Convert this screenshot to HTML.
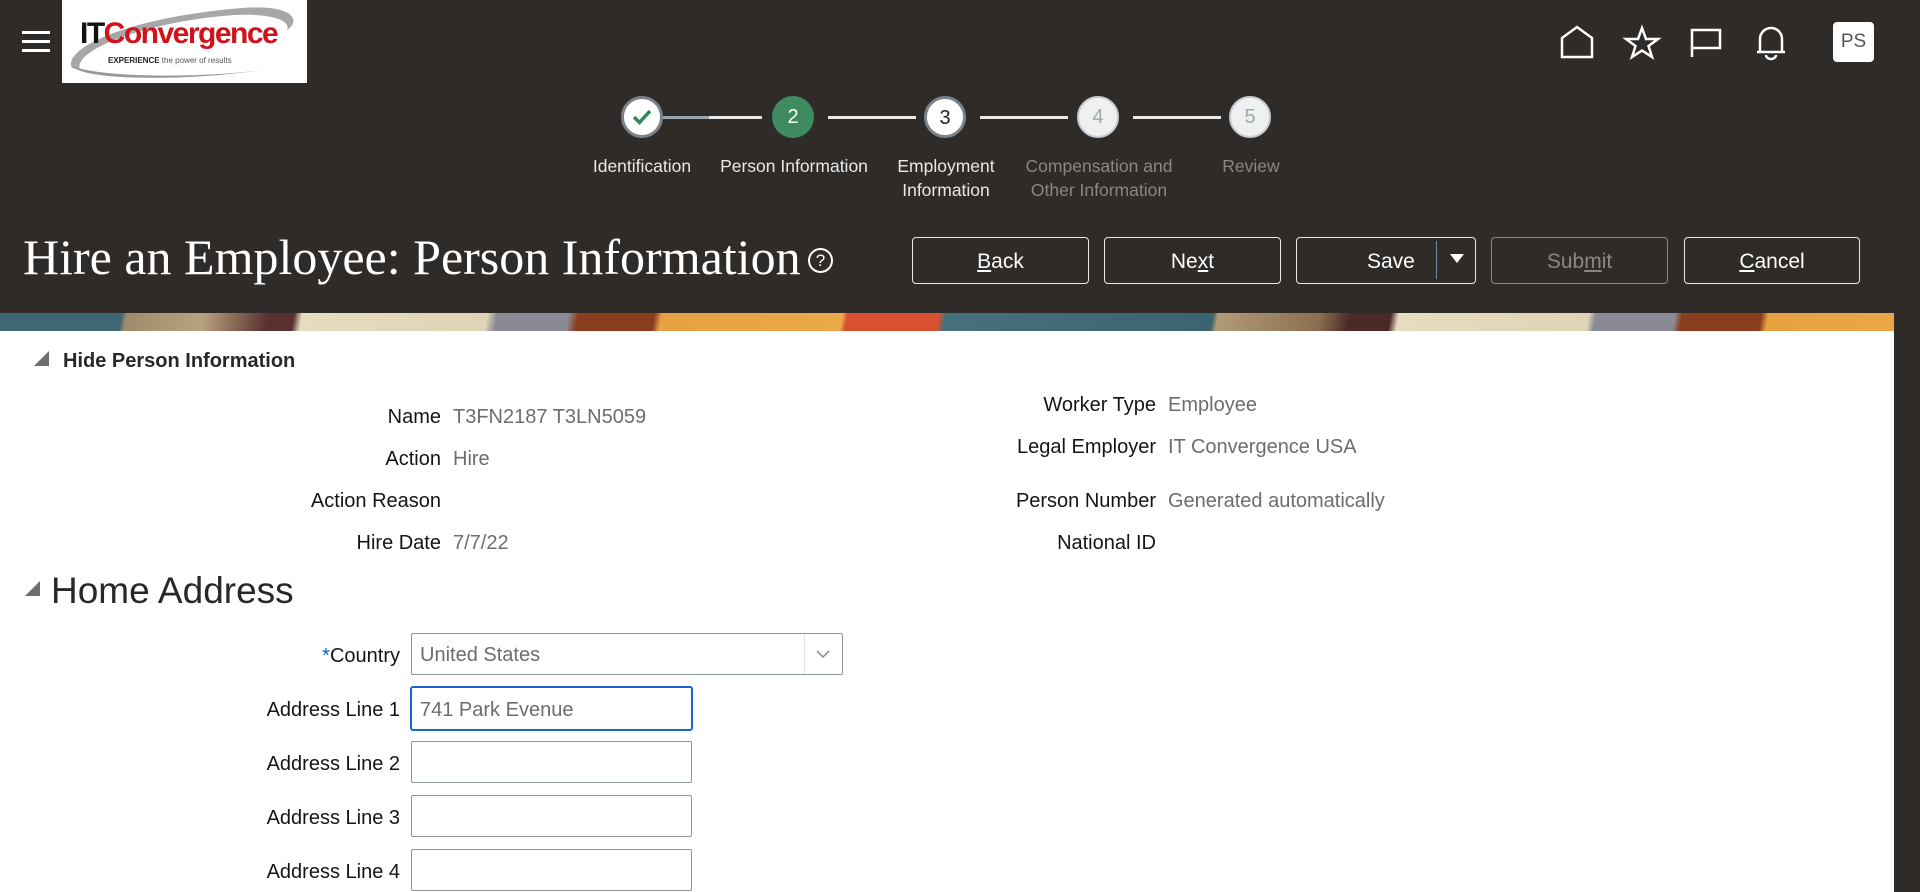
<!DOCTYPE html>
<html><head><meta charset="utf-8">
<style>
*{margin:0;padding:0;box-sizing:border-box}
body{width:1920px;height:892px;overflow:hidden;background:#2f2b28;font-family:"Liberation Sans",sans-serif;position:relative}
.abs{position:absolute}
#content{position:absolute;left:0;top:331px;width:1894px;height:561px;background:#fff}
#banner{position:absolute;left:0;top:313px;width:1894px;height:19px;
background:linear-gradient(100deg,#3f6673 0,#3f6673 120px,#a08a6a 125px,#b8a27e 200px,#5a3030 265px,#5a3030 290px,#e6dcc0 298px,#e0d4b6 480px,#8a8a94 490px,#8a8a94 560px,#8a3d1e 570px,#8a3d1e 645px,#e8a040 652px,#eba848 830px,#d95030 835px,#d95030 925px,#45707e 932px,#3c6470 1195px,#b09a78 1200px,#8a7050 1300px,#4a2a28 1330px,#4a2a28 1370px,#e6dcc0 1378px,#e0d4b6 1565px,#8a8a94 1572px,#8a8a94 1650px,#8a3d1e 1657px,#8a3d1e 1735px,#e8a040 1742px,#eba848 1894px)}
.btn{position:absolute;top:237px;height:47px;border:1.5px solid #e8e8e8;border-radius:4px;color:#fff;font-size:21px;text-align:center;line-height:48px}
.step{position:absolute;width:42px;height:42px;border-radius:50%;top:96px;text-align:center;line-height:38px;font-size:20px}
.line{position:absolute;top:116px;height:3px;background:#e8e8e8}
.sl{position:absolute;top:154px;font-size:17.5px;text-align:center;line-height:24px;width:160px}
.lab{position:absolute;font-size:20px;color:#161513;text-align:right}
.val{position:absolute;font-size:20px;color:#6f6c69}
.inp{position:absolute;border:1px solid #8e959c;border-radius:2px;background:#fff}
</style></head><body>
<div class="abs" style="left:22px;top:31px;width:28px;height:3px;background:#fff"></div>
<div class="abs" style="left:22px;top:40px;width:28px;height:3px;background:#fff"></div>
<div class="abs" style="left:22px;top:49px;width:28px;height:3px;background:#fff"></div>
<div class="abs" style="left:62px;top:0;width:245px;height:83px;background:#fff;overflow:hidden">
<svg width="245" height="83" style="position:absolute;left:0;top:0"><path d="M10 68 C 0 50, 60 18, 180 8 C 230 4, 240 20, 225 30 C 230 18, 200 12, 160 16 C 80 24, 10 50, 18 70 Z" fill="#8a8a8a" opacity="0.75"/><path d="M10 66 C 20 80, 120 82, 200 70 C 140 78, 40 78, 10 66Z" fill="#999"/></svg>
<div class="abs" style="left:18px;top:17px;font-size:30px;font-weight:bold;letter-spacing:-1.5px;color:#111;line-height:34px">IT<span style="color:#d0121b">Convergence</span></div>
<div class="abs" style="left:46px;top:56px;font-size:8px;color:#555;white-space:nowrap"><b style="color:#222">EXPERIENCE</b> the power of results</div>
</div>
<svg class="abs" style="left:1560px;top:24px" width="240" height="38" fill="none" stroke="#fff" stroke-width="2.5">
<path d="M2 33 V14 L17 3 L32 14 V33 Z"/>
<path d="M82 4 L86 15 L98 15 L88.5 22 L92 33 L82 26.5 L72 33 L75.5 22 L66 15 L78 15 Z"/>
<path d="M132 33 V6 H160 V24 H132"/>
<path d="M200 28 V15 A11 11 0 0 1 222 15 V28 Z M197 28 H225"/>
<path d="M206 31 A5 4 0 0 0 216 31" stroke-width="2.5"/>
</svg>
<div class="abs" style="left:1833px;top:22px;width:41px;height:40px;background:#fff;border-radius:4px;color:#555;font-size:19px;text-align:center;line-height:40px">PS</div>
<div class="line" style="left:663px;width:46px;background:#9aa3aa"></div>
<div class="line" style="left:709px;width:53px"></div>
<div class="line" style="left:828px;width:88px"></div>
<div class="line" style="left:980px;width:88px"></div>
<div class="line" style="left:1133px;width:88px"></div>
<div class="step" style="left:621px;background:#fff;border:3px solid #7a828a"><svg width="36" height="36"><path d="M10 18 L15.5 23.5 L26 12" stroke="#2e8a57" stroke-width="3.5" fill="none"/></svg></div>
<div class="step" style="left:772px;background:#3f8a5e;color:#fff;line-height:42px">2</div>
<div class="step" style="left:924px;background:#fff;border:3px solid #7a828a;color:#222">3</div>
<div class="step" style="left:1077px;background:#eef0f2;border:2px solid #c8ccd0;color:#9aa;line-height:38px">4</div>
<div class="step" style="left:1229px;background:#eef0f2;border:2px solid #c8ccd0;color:#9aa;line-height:38px">5</div>
<div class="sl" style="left:562px;color:#e8e8e8">Identification</div>
<div class="sl" style="left:714px;width:160px;color:#e8e8e8;white-space:nowrap">Person Information</div>
<div class="sl" style="left:866px;color:#e8e8e8">Employment<br>Information</div>
<div class="sl" style="left:1019px;color:#8a8784">Compensation and<br>Other Information</div>
<div class="sl" style="left:1171px;color:#8a8784">Review</div>
<div class="abs" style="left:23px;top:227px;font-family:'Liberation Serif',serif;font-size:50px;color:#fff;white-space:nowrap;line-height:60px">Hire an Employee: Person Information</div>
<div class="abs" style="left:808px;top:248px;width:25px;height:25px;border:2px solid #fff;border-radius:50%;color:#fff;font-size:17px;text-align:center;line-height:21px">?</div>
<div class="btn" style="left:912px;width:177px"><u>B</u>ack</div>
<div class="btn" style="left:1104px;width:177px">Ne<u>x</u>t</div>
<div class="btn" style="left:1296px;width:180px;text-align:left;padding-left:70px">Save
<div class="abs" style="left:139px;top:3px;width:1px;height:38px;background:#6f8aa0"></div>
<div class="abs" style="left:153px;top:16px;width:0;height:0;border-left:7px solid transparent;border-right:7px solid transparent;border-top:9px solid #fff"></div></div>
<div class="btn" style="left:1491px;width:177px;border-color:#8a8784;color:#8a8784">Sub<u>m</u>it</div>
<div class="btn" style="left:1684px;width:176px"><u>C</u>ancel</div>
<div id="banner"></div>
<div id="content"></div>
<div class="abs" style="left:34px;top:351px;width:0;height:0;border-left:15px solid transparent;border-bottom:15px solid #6f6c69"></div>
<div class="abs" style="left:63px;top:349px;font-size:20px;font-weight:bold;color:#2a2725;line-height:24px">Hide Person Information</div>
<div class="lab" style="right:1479px;top:406px">Name</div><div class="val" style="left:453px;top:406px">T3FN2187 T3LN5059</div>
<div class="lab" style="right:1479px;top:448px">Action</div><div class="val" style="left:453px;top:448px">Hire</div>
<div class="lab" style="right:1479px;top:490px">Action Reason</div>
<div class="lab" style="right:1479px;top:532px">Hire Date</div><div class="val" style="left:453px;top:532px">7/7/22</div>
<div class="lab" style="right:764px;top:394px">Worker Type</div><div class="val" style="left:1168px;top:394px">Employee</div>
<div class="lab" style="right:764px;top:436px">Legal Employer</div><div class="val" style="left:1168px;top:436px">IT Convergence USA</div>
<div class="lab" style="right:764px;top:490px">Person Number</div><div class="val" style="left:1168px;top:490px">Generated automatically</div>
<div class="lab" style="right:764px;top:532px">National ID</div>
<div class="abs" style="left:25px;top:581px;width:0;height:0;border-left:15px solid transparent;border-bottom:15px solid #6f6c69"></div>
<div class="abs" style="left:51px;top:568px;font-size:37px;color:#2a2725;line-height:46px">Home Address</div>
<div class="lab" style="right:1520px;top:645px"><span style="color:#1060c0">*</span>Country</div>
<div class="inp" style="left:411px;top:633px;width:432px;height:42px"><div class="val" style="left:8px;top:10px;font-size:20px">United States</div>
<div class="abs" style="left:392px;top:0;width:1px;height:40px;background:#e4e4e4"></div>
<svg class="abs" style="left:402px;top:14px" width="18" height="12"><path d="M3 3 L9 9 L15 3" stroke="#888" stroke-width="1.5" fill="none"/></svg></div>
<div class="lab" style="right:1520px;top:699px">Address Line 1</div>
<div class="inp" style="left:410px;top:686px;width:283px;height:45px;border:2.5px solid #1b63d6;border-radius:3px"><div class="val" style="left:8px;top:11px">741 Park Evenue</div></div>
<div class="lab" style="right:1520px;top:753px">Address Line 2</div>
<div class="inp" style="left:411px;top:741px;width:281px;height:42px"></div>
<div class="lab" style="right:1520px;top:807px">Address Line 3</div>
<div class="inp" style="left:411px;top:795px;width:281px;height:42px"></div>
<div class="lab" style="right:1520px;top:861px">Address Line 4</div>
<div class="inp" style="left:411px;top:849px;width:281px;height:42px"></div>
</body></html>
